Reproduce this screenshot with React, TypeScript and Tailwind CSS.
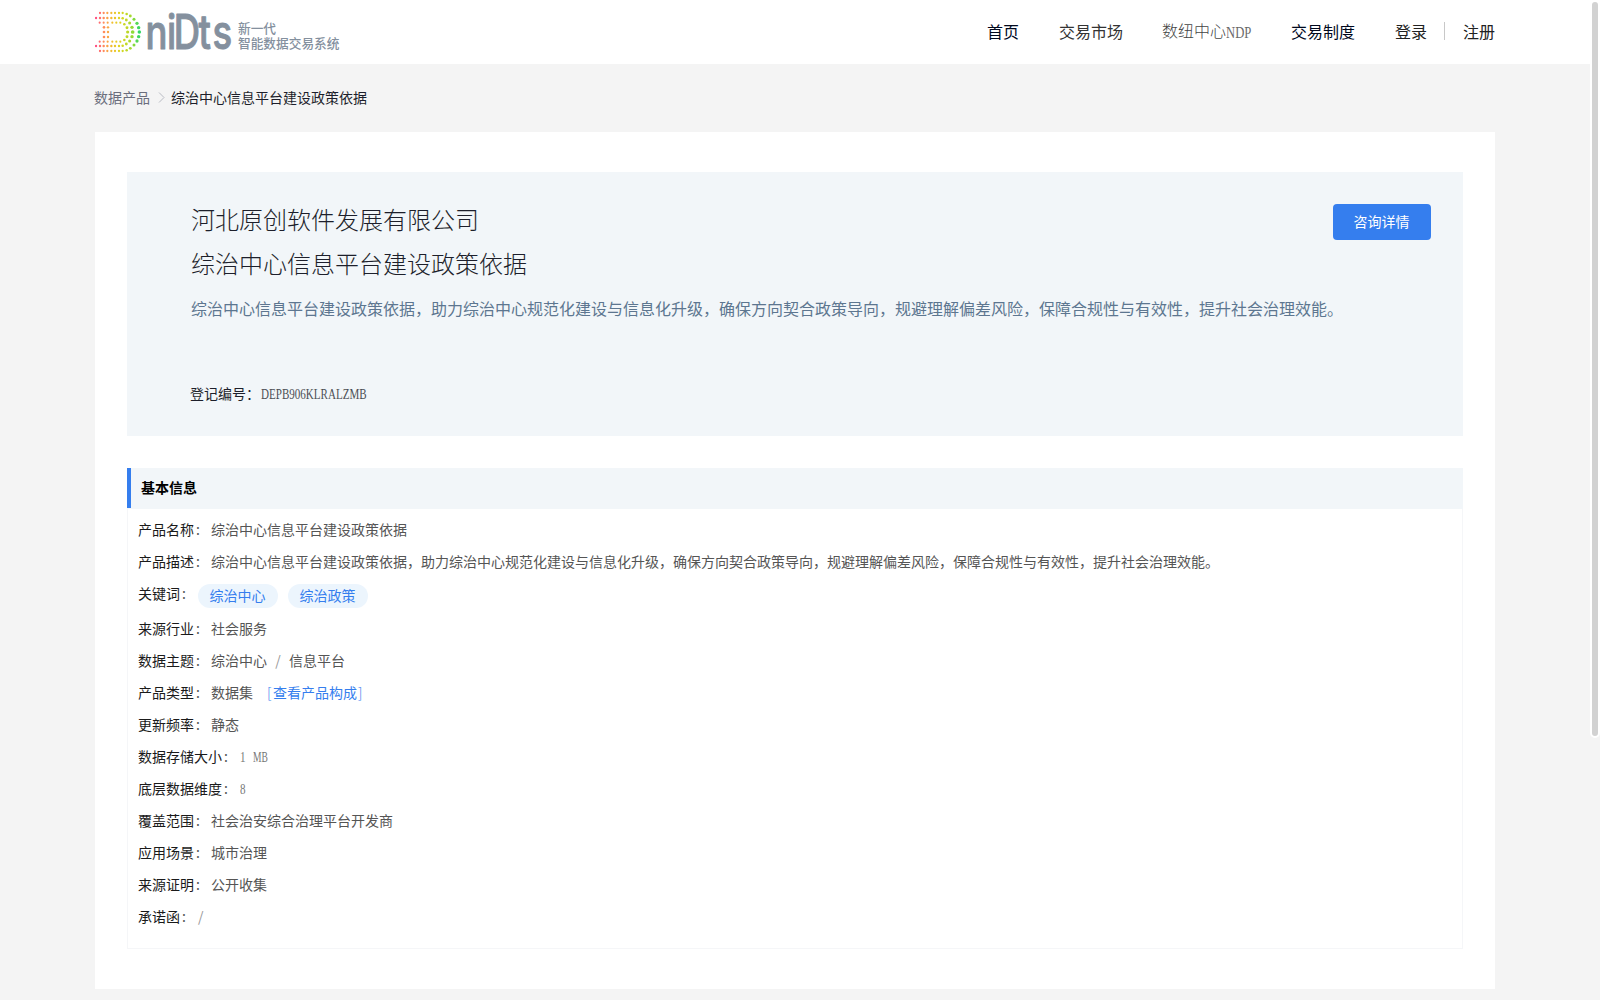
import React from "react";

type Dot = [number, number, number];

const dots: Dot[] = [
  // outer contour
  ...[30, 41, 52, 64, 75, 87, 98].flatMap((x): Dot[] => [[x, 15, 3.4], [x, 129, 3.4]]),
  [110, 18, 3.8], [121, 24, 4.2], [132, 34, 4.5], [141, 46, 4.9], [146, 59, 5.1], [148, 72, 5.3],
  [146, 86, 5.1], [141, 99, 4.9], [132, 111, 4.5], [121, 121, 4.2], [110, 127, 3.8],
  // middle contour
  ...[18, 30, 41, 52, 64, 75, 87].flatMap((x): Dot[] => [[x, 30, 3.6], [x, 114, 3.6]]),
  [98, 31, 3.8], [109, 36, 4.2], [119, 45, 4.6], [126, 58, 5.1], [128, 72, 5.5],
  [126, 86, 5.1], [119, 99, 4.6], [109, 108, 4.2], [98, 113, 3.8],
  // inner contour
  ...[29, 41, 53, 67, 79, 91].flatMap((x): Dot[] => [[x, 44, 3.2], [x, 101, 3.2]]),
  [103, 49, 3.8], [111, 59, 4.4], [113, 72, 4.8], [111, 86, 4.4], [103, 96, 3.8],
  // stem
  ...[58, 72, 87].flatMap((y): Dot[] => [[42, y, 3.9], [54, y, 3.6]]),
];

const stops: [number, number[]][] = [
  [18, [255, 80, 130]],
  [42, [255, 140, 90]],
  [62, [245, 185, 50]],
  [90, [222, 214, 30]],
  [115, [185, 216, 40]],
  [132, [130, 218, 60]],
  [148, [50, 215, 100]],
];

function dotColor(x: number) {
  for (let i = 1; i < stops.length; i++) {
    if (x <= stops[i][0]) {
      const [x0, a] = stops[i - 1];
      const [x1, b] = stops[i];
      const t = Math.max(0, (x - x0) / (x1 - x0));
      return `rgb(${a.map((v, k) => Math.round(v + (b[k] - v) * t)).join(",")})`;
    }
  }
  return "rgb(50,215,100)";
}

function Logo() {
  return (
    <div className="flex h-16 items-center text-[#84909e]">
      <svg width="142" height="64" viewBox="0 0 142 64" className="shrink-0">
        <g transform="translate(-5 8) scale(0.33333)">
          {dots.map(([x, y, r], i) => (
            <circle key={i} cx={x} cy={y} r={r} fill={dotColor(x)} />
          ))}
        </g>
        <text
          transform="scale(0.76 1)"
          x="66.5 94.7 103.7 136.3 154.6"
          y="49.3"
          fontSize="48"
          fontWeight="500"
          fill="currentColor"
          stroke="currentColor"
          strokeWidth="1"
          strokeLinejoin="round"
          className="font-['Inter',sans-serif]"
        >
          niDts
        </text>
      </svg>
      <p className="mt-1.5 ml-px text-[12.7px] leading-[15px] font-medium whitespace-nowrap">
        新一代
        <br />
        智能数据交易系统
      </p>
    </div>
  );
}

/* Condensed serif Latin text whose letters average half an em. */
function Narrow({ children, width }: { children: string; width: string }) {
  return (
    <span className={`inline-block translate-y-px whitespace-pre opacity-80 ${width}`}>
      <span className="inline-block origin-left scale-x-[0.79] font-['Liberation_Serif',serif]">{children}</span>
    </span>
  );
}

function Row({ label, children }: { label: string; children: React.ReactNode }) {
  return (
    <div className="flex h-8 items-center">
      <span className="text-[#1a1a1a]">{label}</span>
      <span className="w-[17px] pl-0.5">:</span>
      <span className="flex items-center whitespace-nowrap">{children}</span>
    </div>
  );
}

function Tag({ children }: { children: string }) {
  return (
    <span className="mt-[5px] flex h-6 w-20 items-center justify-center rounded-full bg-[#ecf5fd] pr-px pb-0.5 text-[#357eee]">
      {children}
    </span>
  );
}

const summary =
  "综治中心信息平台建设政策依据，助力综治中心规范化建设与信息化升级，确保方向契合政策导向，规避理解偏差风险，保障合规性与有效性，提升社会治理效能。";

export default function App() {
  return (
    <div className="relative h-[1000px] w-[1600px] overflow-hidden bg-[#f4f4f4] font-['Noto_Sans_CJK_SC',sans-serif] text-sm font-normal text-[#1d1f2b]">
      <header className="h-16 bg-white">
        <div className="ml-[95px] flex w-[1400px] items-center justify-between">
          <Logo />
          <nav className="flex items-center gap-10 pb-0.5 text-base whitespace-nowrap">
            <a className="text-[#00081d]">首页</a>
            <a className="text-[#333]">交易市场</a>
            <a className="-ml-px flex font-light text-[#444]">
              数纽中心<Narrow width="w-[25px]">NDP</Narrow>
            </a>
            <a className="text-[#00081d]">交易制度</a>
            <div className="flex items-center text-[#222]">
              <a>登录</a>
              <span className="mr-[18px] ml-[17px] h-[18px] w-px bg-[#c8c8c8]" />
              <a>注册</a>
            </div>
          </nav>
        </div>
      </header>

      <main className="ml-[95px] w-[1400px]">
        <div className="flex h-[68px] items-center pb-0.5 whitespace-nowrap">
          <span className="-ml-px text-[#6b6e7d]">数据产品</span>
          <svg width="20" height="14" viewBox="0 0 20 14" fill="none" stroke="#b9bcc4" className="ml-px">
            <path d="M8 2.5 L13 7.5 L8 12.5" />
          </svg>
          <span>综治中心信息平台建设政策依据</span>
        </div>

        <div className="h-[857px] bg-white px-8 pt-10">
          <section className="flex h-[264px] justify-between bg-[#f2f6f9] pt-[25px] pr-8 pl-16">
            <div className="whitespace-nowrap">
              <h1 className="text-2xl leading-[44px] font-light">河北原创软件发展有限公司</h1>
              <h2 className="text-2xl leading-[44px] font-light">综治中心信息平台建设政策依据</h2>
              <p className="h-[84px] w-0 text-base leading-[46px] text-[#5d7690]">{summary}</p>
              <div className="-ml-px flex h-12 items-center">
                <span>登记编号：</span>
                <span className="ml-px flex">
                  <Narrow width="w-[105px]">DEPB906KLRALZMB</Narrow>
                </span>
              </div>
            </div>
            <button className="mt-[7px] flex h-9 w-[98px] items-center justify-center rounded bg-[#357eee] pr-px pb-0.5 text-white">
              咨询详情
            </button>
          </section>

          <section className="mt-8 h-[481px]">
            <div className="h-[41px] bg-[#f2f6f9]">
              <h3 className="flex h-10 items-center border-l-4 border-[#357eee] pb-0.5 pl-[10px] font-bold text-black">
                基本信息
              </h3>
            </div>
            <div className="h-[440px] border border-t-0 border-[#f5f6f8] pt-1 pl-[10px] text-[#555]">
              <Row label="产品名称">综治中心信息平台建设政策依据</Row>
              <Row label="产品描述">{summary}</Row>
              <div className="mb-[3px]">
                <Row label="关键词">
                  <span className="ml-px flex gap-[10px]">
                    <Tag>综治中心</Tag>
                    <Tag>综治政策</Tag>
                  </span>
                </Row>
              </div>
              <Row label="来源行业">社会服务</Row>
              <Row label="数据主题">
                综治中心<span className="w-[22px] text-center text-[#999]">/</span>信息平台
              </Row>
              <Row label="产品类型">
                数据集
                <a className="ml-[14px] flex text-[#357eee]">
                  <span className="w-[6px] font-light">[</span>查看产品构成
                  <span className="pl-px font-light">]</span>
                </a>
              </Row>
              <Row label="更新频率">静态</Row>
              <Row label="数据存储大小">
                <span className="ml-px flex">
                  <Narrow width="w-[13px]">1</Narrow>
                  <span className="origin-left scale-x-[0.86]">
                    <Narrow width="w-[14px]">MB</Narrow>
                  </span>
                </span>
              </Row>
              <Row label="底层数据维度">
                <span className="ml-px flex">
                  <Narrow width="w-2">8</Narrow>
                </span>
              </Row>
              <Row label="覆盖范围">社会治安综合治理平台开发商</Row>
              <Row label="应用场景">城市治理</Row>
              <Row label="来源证明">公开收集</Row>
              <Row label="承诺函">
                <span className="ml-px text-[#999]">/</span>
              </Row>
            </div>
          </section>
        </div>
      </main>

      <div className="absolute top-0 right-0 h-[738px] w-[10px] rounded-full border-2 border-white bg-[#d2d2d2]" />
    </div>
  );
}
